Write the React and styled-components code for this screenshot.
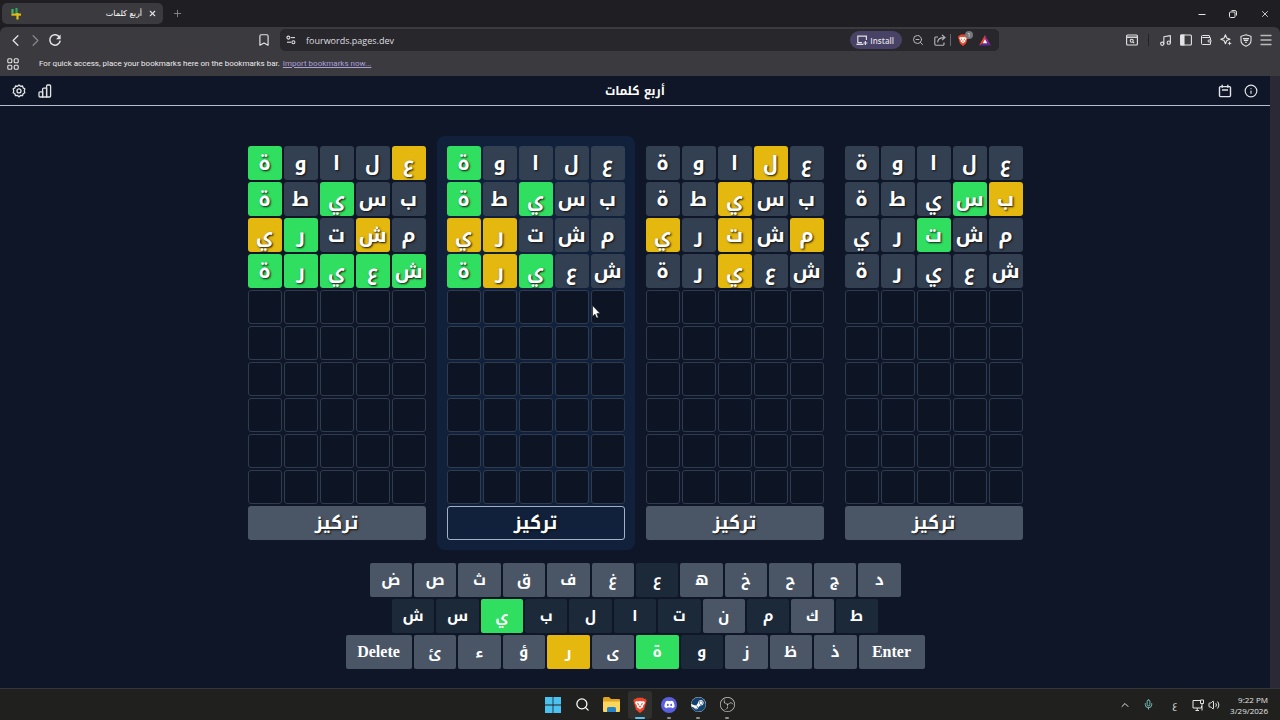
import React from 'react';
import styled, { createGlobalStyle, css } from 'styled-components';
import {
  Bookmark, ChevronLeft, ChevronRight, ChevronUp, Mic, Music, Plus, Search,
  Volume2, Wallet, X, ZoomOut, Info,
} from 'lucide-react';
import { FaDiscord, FaSteam } from 'react-icons/fa';
import { SiObsstudio } from 'react-icons/si';

const GlobalStyle = createGlobalStyle`
  * {
    box-sizing: border-box;
  }
  body {
    margin: 0;
    background: #0e1628;
    color: #fff;
    font-family: "Open Sans", "Noto Sans", sans-serif;
  }
  button, input {
    font: inherit;
    color: inherit;
    border: 0;
    padding: 0;
    margin: 0;
    background: none;
  }
  svg {
    display: block;
    flex: none;
  }
`;

const ARABIC = '"Noto Kufi Arabic", "Noto Sans Arabic", "DejaVu Sans", sans-serif';

const WORDS = ['علاوة', 'بسيطة', 'مشتري', 'شعيرة'];
const ROW_COUNT = 10;

// g = right place, y = wrong place, n = not in the word
const BOARDS = [
  { id: 1, marks: ['ynnng', 'nngng', 'nyngy', 'ggggg'] },
  { id: 2, marks: ['nnnng', 'nngng', 'nnnyy', 'nngyg'], focused: true },
  { id: 3, marks: ['nynnn', 'nnynn', 'ynyny', 'nnynn'] },
  { id: 4, marks: ['nnnnn', 'ygnnn', 'nngnn', 'nnnnn'] },
];

const KEY_ROWS = [
  { name: 'top', width: 531, keys: [...'ضصثقفغعهخحجد'] },
  { name: 'middle', width: 486, keys: [...'شسيبلاتنمكط'] },
  { name: 'bottom', width: 579, keys: ['Delete', ...'ئءؤرىةوزظذ', 'Enter'] },
];
const KEY_STATES = {
  ي: 'g', ة: 'g', ر: 'y',
  ع: 'used', ش: 'used', س: 'used', ب: 'used', ل: 'used', ا: 'used',
  ت: 'used', م: 'used', ط: 'used', و: 'used',
};

const COLORS = {
  g: '#30df60',
  y: '#e4b80f',
  n: '#334052',
  used: '#1c2939',
};

const ReloadIcon = () => (
  <svg width="14" height="14" viewBox="0 0 14 14" fill="none" stroke="currentColor" strokeWidth="1.5">
    <path d="M11.6 4.4A5.2 5.2 0 1 0 12.2 7.6" />
    <path d="M12.6 1.6v4.6H8z" fill="currentColor" stroke="none" />
  </svg>
);
const GridIcon = () => (
  <svg width="12" height="12" viewBox="0 0 12 12" fill="none" stroke="currentColor" strokeWidth="1.1">
    <rect x="0.8" y="0.8" width="4" height="4" rx="1" />
    <rect x="7.2" y="0.8" width="4" height="4" rx="1" />
    <rect x="0.8" y="7.2" width="4" height="4" rx="1" />
    <rect x="7.2" y="7.2" width="4" height="4" rx="1" />
  </svg>
);
const TuneIcon = () => (
  <svg width="10" height="10" viewBox="0 0 10 10" fill="none" stroke="currentColor" strokeWidth="1.1">
    <circle cx="2.4" cy="2.6" r="1.5" />
    <path d="M5 2.6h4" />
    <circle cx="7.4" cy="7.2" r="1.5" />
    <path d="M1 7.2h4" />
  </svg>
);
const InstallIcon = () => (
  <svg width="12" height="12" viewBox="0 0 12 12" fill="none" stroke="currentColor" strokeWidth="1.2">
    <path d="M6 8.6H1.8V2.2h8.6V6M0.4 10.4h7M9.4 7v4M7.4 9h4" />
  </svg>
);
const ShareIcon = () => (
  <svg width="12" height="12" viewBox="0 0 12 12" fill="none" stroke="#b9b8bc" strokeWidth="1.1">
    <path d="M4 3H1.6A1 1 0 0 0 .8 4v6.2a1 1 0 0 0 1 1H9a1 1 0 0 0 1-1V8.4" />
    <path d="M3.6 8.4c.2-3 2-4.8 6.4-4.8M8 1l3 2.6-3 2.6" />
  </svg>
);
const BatIcon = () => (
  <svg width="12" height="11" viewBox="0 0 12 11">
    <path d="M6 0L0 10.6l6-3.4z" fill="#e8412c" />
    <path d="M6 0l6 10.6-6-3.4z" fill="#8a2a92" />
    <path d="M0 10.6h12L6 7z" fill="#5b2a9c" />
    <path d="M6 4.2l2.2 4H3.8z" fill="#fff" />
  </svg>
);
const BraveMark = ({ size }) => (
  <svg width={size} height={size} viewBox="0 0 24 24">
    <path d="M7.5 1h9l2 2 2-.2L22 6l-1 3-3 10-6 5-6-5L3 9 2 6l1.5-3.2 2 .2z" fill="#f0452a" />
    <path d="M6 6l3 .6L12 6l3 .6L18 6l1.5 3-3 4 .3 2L12 18.500 7.200 15l.3-2-3-4z" fill="#fff" />
    <path d="M7.5 9l3 1-1 3zM16.500 9l-3 1 1 3zM12 12l1.500 2.500L12 16l-1.500-1.500z" fill="#f0452a" />
  </svg>
);
const TabSearchIcon = () => (
  <svg width="12" height="12" viewBox="0 0 12 12" fill="none" stroke="currentColor" strokeWidth="1.1">
    <rect x="0.6" y="1" width="10.8" height="10" rx="1" />
    <path d="M.6 3.2h10.8" strokeWidth="1.4" />
    <circle cx="5.7" cy="6.8" r="1.5" />
    <path d="M6.8 7.9l1.4 1.3" />
  </svg>
);
const PanelIcon = () => (
  <svg width="12" height="12" viewBox="0 0 12 12" fill="none" stroke="currentColor" strokeWidth="1.1">
    <rect x="0.6" y="1" width="10.8" height="10" rx="1" />
    <path d="M1 1h3v10H1z" fill="currentColor" />
  </svg>
);
const LeoIcon = () => (
  <svg width="12" height="12" viewBox="0 0 12 12" fill="none" stroke="currentColor" strokeWidth="1.1" strokeLinejoin="round">
    <path d="M5.400.8l1.300 3.200 3.300 1.300-2.200.8-1.100.6-1.300 3.100-1.300-3.200-3.300-1.300 3.300-1.300z" />
    <path d="M9.600 7l.6 1.700 1.600.6-1.600.6-.6 1.700-.6-1.700-1.600-.6 1.600-.6z" fill="currentColor" stroke="none" />
  </svg>
);
const VpnIcon = () => (
  <svg width="12" height="13" viewBox="0 0 12 13" fill="none" stroke="currentColor" strokeWidth="1.1">
    <path d="M6 .8l5 1.500v4.200c0 2.600-2 4.600-5 5.700-3-1.100-5-3.100-5-5.700V2.300z" />
    <path d="M3 4.600h6M3.800 6.400h4.400M5 8.200h2" />
  </svg>
);
const MenuIcon = () => (
  <svg width="12" height="12" viewBox="0 0 12 12" stroke="#bbb" strokeWidth="1.5">
    <path d="M.5 1.500h11M.5 6h11M.5 10.500h11" />
  </svg>
);
const MinimizeIcon = () => (
  <svg width="8" height="8" viewBox="0 0 8 8" stroke="currentColor"><path d="M.5 4.500h7" /></svg>
);
const RestoreIcon = () => (
  <svg width="8" height="8" viewBox="0 0 8 8" fill="none" stroke="currentColor">
    <rect x="0.5" y="2" width="5.5" height="5.5" rx="1" />
    <path d="M2.500.6h3.500a1.500 1.500 0 0 1 1.500 1.500v3.400" />
  </svg>
);
const FourIcon = () => (
  <svg width="12" height="12" viewBox="0 0 12 12" fill="none" strokeWidth="2.2">
    <path d="M2.500 1v4.500" stroke="#2fbf63" />
    <path d="M6.500 0v7" stroke="#2fa862" />
    <path d="M1.400 6.600H11" stroke="#e4b80f" />
    <path d="M7.500 5v6.500" stroke="#d8c21c" />
  </svg>
);
const GearIcon = () => (
  <svg width="14" height="14" viewBox="0 0 14 14" fill="none" stroke="currentColor" strokeWidth="1.3" strokeLinejoin="round">
    <path d="M7 1l1.500 1.300 2-.3.600 1.900 1.700 1-.5 1.900.5 2-1.700 1-.6 1.900-2-.3L7 12.800l-1.500-1.400-2 .3-.6-1.900-1.700-1 .5-2-.5-1.900 1.700-1L3.500 2l2 .3z" />
    <circle cx="7" cy="6.900" r="2" />
  </svg>
);
const StatsIcon = () => (
  <svg width="14" height="14" viewBox="0 0 14 14" fill="none" stroke="currentColor" strokeWidth="1.3" strokeLinejoin="round">
    <path d="M1 12V8.800a1 1 0 0 1 1-1h2.600V13H2a1 1 0 0 1-1-1z" />
    <path d="M4.600 13V5.200a1 1 0 0 1 1-1h3V13z" />
    <path d="M8.600 13V2a1 1 0 0 1 1-1h2a1 1 0 0 1 1 1v10a1 1 0 0 1-1 1z" />
  </svg>
);
const CalendarIcon = () => (
  <svg width="14" height="14" viewBox="0 0 14 14" fill="none" stroke="currentColor" strokeWidth="1.4">
    <rect x="1.5" y="2.600" width="11" height="10" rx="1" />
    <path d="M4.200.8v3M9.800.8v3M4 6h6" />
  </svg>
);
const PointerIcon = () => (
  <svg width="9" height="14" viewBox="0 0 9 14">
    <path d="M.6.600v10.800l2.400-2.200 1.600 3.900 1.800-.7-1.600-3.800h3.300z" fill="#fff" stroke="#111" strokeWidth="0.6" />
  </svg>
);
const WindowsIcon = () => (
  <svg width="16" height="16" viewBox="0 0 16 16" fill="#4cc2f1">
    <path d="M0 0h7.600v7.600H0zM8.400 0H16v7.600H8.400zM0 8.400h7.600V16H0zM8.400 8.400H16V16H8.400z" />
  </svg>
);
const FolderIcon = () => (
  <svg width="17" height="15" viewBox="0 0 17 15">
    <path d="M0 1.500A1.500 1.500 0 0 1 1.500 0H6l2 2h8a1 1 0 0 1 1 1v11H0z" fill="#e0a526" />
    <path d="M0 4.500h17V14a1 1 0 0 1-1 1H1a1 1 0 0 1-1-1z" fill="#fbd65b" />
    <path d="M4 15v-3.500A1.500 1.500 0 0 1 5.500 10h6a1.500 1.500 0 0 1 1.500 1.500V15z" fill="#2584c9" />
  </svg>
);
const NetworkIcon = () => (
  <svg width="12" height="12" viewBox="0 0 12 12" fill="none" stroke="currentColor">
    <path d="M8 1.500H1v7.500h8.500V7M3.500 11.500H7M5.200 9v2.500" />
    <path d="M8.500 1h3v3.500h-3zM10 4.500v7" />
  </svg>
);

const Screen = styled.div`
  display: flex;
  flex-direction: column;
  min-height: 100vh;
`;

const TabStrip = styled.div`
  display: flex;
  align-items: center;
  height: 27px;
  padding: 0 10px 0 2px;
  background: #1f1e22;
`;
const Tab = styled.div`
  display: flex;
  align-items: center;
  width: 161px;
  height: 21px;
  margin-right: 9px;
  padding: 0 6px 0 8px;
  gap: 6px;
  border-radius: 5px;
  background: #3b3a3e;
`;
const TabTitle = styled.span`
  flex: 1;
  direction: rtl;
  font: 8px/16px "DejaVu Sans", sans-serif;
`;
const WindowButtons = styled.div`
  display: flex;
  gap: 23px;
  margin-left: auto;
`;
const IconButton = styled.button`
  display: flex;
  align-items: center;
  justify-content: center;
  color: ${props => props.$dim ? '#88878b' : '#e4e4e6'};
`;

const ToolbarWrap = styled.div`
  background: #1f1e22;
`;
const Toolbar = styled.div`
  display: flex;
  align-items: center;
  height: 26px;
  padding: 0 8px 0 5px;
  background: #3b3a3e;
  border-radius: 6px 6px 0 0;
`;
const NavButtons = styled.div`
  display: flex;
  width: 252px;

  button {
    width: 20px;
  }
`;
const AddressBar = styled.form`
  display: flex;
  flex: 1;
  align-items: center;
  gap: 10px;
  height: 22px;
  margin: 0 127px 0 9px;
  padding: 0 8px 0 6px;
  border-radius: 5px;
  background: #28272b;
  color: #dedee0;
`;
const AddressInput = styled.input`
  flex: 1;
  min-width: 0;
  height: 20px;
  font-size: 9px;
  outline: 0;
`;
const InstallButton = styled.button`
  display: flex;
  align-items: center;
  gap: 2px;
  height: 18px;
  padding: 0 8px 0 6px;
  border-radius: 9px;
  background: #484266;
  font-size: 8px;
  font-weight: 600;
`;
const AddressDivider = styled.span`
  width: 1px;
  height: 12px;
  margin: 0 -4px 0 -6px;
  background: #66656a;
`;
const ShieldButton = styled(IconButton)`
  position: relative;
`;
const ShieldCount = styled.span`
  position: absolute;
  top: -3px;
  right: -4px;
  width: 8px;
  height: 8px;
  border-radius: 4px;
  background: #77777d;
  font-size: 6px;
  line-height: 8px;
`;
const Extras = styled.div`
  display: flex;
  align-items: center;
  gap: 8px;
`;
const ExtrasDivider = styled.span`
  width: 1px;
  height: 12px;
  margin: 0 2px;
  background: #242428;
`;
const BookmarksBar = styled.div`
  display: flex;
  align-items: center;
  height: 23px;
  padding: 0 7px 2px;
  background: #3b3a3e;
  font: 8px/12px Roboto, sans-serif;
  color: #ececee;
`;
const BookmarksHint = styled.span`
  margin-left: 20px;
`;
const BookmarksLink = styled.a`
  margin-left: 3px;
  color: #aaa0dc;
  text-decoration: underline;
`;

const Viewport = styled.div`
  display: flex;
  flex: 1;
`;
const Scrollbar = styled.div`
  width: 10px;
  background: #2a2935;
`;
const Page = styled.main`
  flex: 1;
  background: #0e1628;
`;
const Header = styled.header`
  display: flex;
  align-items: center;
  justify-content: space-between;
  height: 30px;
  padding: 0 12px;
  border-bottom: 1px solid #b6bccb;
`;
const HeaderGroup = styled.div`
  display: flex;
  gap: 12px;
`;
const Title = styled.h1`
  margin: 0;
  font: bold 12px/20px ${ARABIC};
`;

const Boards = styled.section`
  display: flex;
  justify-content: center;
  gap: 1px;
  padding: 30px 0 13px;
`;
const BoardPanel = styled.div`
  display: flex;
  flex-direction: column;
  gap: 2px;
  width: 198px;
  padding: 10px;
  border-radius: 8px;
  background: ${props => props.$focused ? '#11213b' : 'transparent'};
`;
const Grid = styled.div`
  display: grid;
  grid-template-columns: repeat(5, 1fr);
  gap: 2px;
  direction: rtl;
`;
const Tile = styled.div`
  position: relative;
  display: flex;
  align-items: center;
  justify-content: center;
  height: 34px;
  border-radius: 3px;
  font: bold 20px/34px ${ARABIC};
  text-shadow: 1px 1px 2px #111;
  ${props => props.$mark ? css`
    background: ${COLORS[props.$mark]};
  ` : css`
    border: 1px solid #2f3b4e;
    background: #0d1525;
  `}
`;
const Pointer = styled.span`
  position: absolute;
  top: 14px;
  left: 0;
`;
const FocusButton = styled.button`
  height: 34px;
  border-radius: 3px;
  font: bold 18px/30px ${ARABIC};
  text-shadow: 1px 1px 2px #111;
  background: #4a5666;
  ${props => props.$focused && css`
    border: 1px solid #a5b0c0;
    background: #11213b;
  `}
`;

const Keyboard = styled.section`
  display: flex;
  flex-direction: column;
  align-items: center;
  gap: 2px;
`;
const KeyRow = styled.div`
  display: flex;
  gap: 2px;
  width: ${props => props.$width}px;
`;
const Key = styled.button`
  flex: ${props => props.$wide ? '0 0 66px' : '1 1 0'};
  height: 34px;
  border-radius: 2px;
  background: ${props => COLORS[props.$state] || '#4a5666'};
  font: ${props => props.$wide ? 'bold 16px/30px "Liberation Serif", serif' : `bold 15px/30px ${ARABIC}`};
`;

const Taskbar = styled.footer`
  display: grid;
  grid-template-columns: 1fr auto 1fr;
  align-items: center;
  height: 32px;
  padding: 0 12px;
  border-top: 1px solid #35363a;
  background: #20211f;
`;
const Apps = styled.div`
  grid-column: 2;
  display: flex;
  gap: 5px;
`;
const AppButton = styled.button`
  position: relative;
  display: flex;
  align-items: center;
  justify-content: center;
  width: 24px;
  height: 28px;
  border-radius: 3px;
  color: ${props => props.$color || '#fff'};
  background: ${props => props.$active ? '#30302f' : 'none'};

  &::after {
    content: "";
    position: absolute;
    bottom: 0;
    width: ${props => props.$active ? '10px' : '4px'};
    height: 2px;
    border-radius: 1px;
    background: ${props => props.$active ? '#5cc0ee' : props.$running ? '#8f8f8f' : 'none'};
  }
`;
const DiscordBadge = styled.span`
  display: flex;
  align-items: center;
  justify-content: center;
  width: 16px;
  height: 16px;
  border-radius: 8px;
  background: #5a5fe0;
`;
const SteamBadge = styled.span`
  border-radius: 8px;
  background: #fff;
`;
const Tray = styled.div`
  display: flex;
  align-items: center;
  justify-content: flex-end;
  gap: 4px;
  color: #e4e4e4;
`;
const TrayGroup = styled.div`
  display: flex;
  align-items: center;
  gap: ${props => props.$gap}px;
  margin-right: ${props => props.$after}px;
`;
const TrayLanguage = styled.span`
  font: 9px/14px ${ARABIC};
`;
const Clock = styled.div`
  font-size: 8px;
  line-height: 11px;
  text-align: right;
`;

const Browser = () => (
  <>
    <TabStrip>
      <Tab>
        <FourIcon />
        <TabTitle>أربع كلمات</TabTitle>
        <IconButton aria-label="Close tab"><X size={9} strokeWidth={3} /></IconButton>
      </Tab>
      <IconButton $dim aria-label="New tab"><Plus size={11} /></IconButton>
      <WindowButtons>
        <IconButton aria-label="Minimize"><MinimizeIcon /></IconButton>
        <IconButton aria-label="Restore"><RestoreIcon /></IconButton>
        <IconButton aria-label="Close"><X size={10} /></IconButton>
      </WindowButtons>
    </TabStrip>
    <ToolbarWrap>
      <Toolbar>
        <NavButtons>
          <IconButton aria-label="Back"><ChevronLeft size={19} strokeWidth={1.6} /></IconButton>
          <IconButton $dim aria-label="Forward"><ChevronRight size={19} strokeWidth={1.6} /></IconButton>
          <IconButton aria-label="Reload"><ReloadIcon /></IconButton>
        </NavButtons>
        <IconButton aria-label="Bookmark"><Bookmark size={14} /></IconButton>
        <AddressBar>
          <TuneIcon />
          <AddressInput aria-label="Address" defaultValue="fourwords.pages.dev" />
          <InstallButton type="button"><InstallIcon />Install</InstallButton>
          <IconButton type="button" aria-label="Zoom"><ZoomOut size={12} color="#b9b8bc" /></IconButton>
          <IconButton type="button" aria-label="Share"><ShareIcon /></IconButton>
          <AddressDivider />
          <ShieldButton type="button" aria-label="Shields">
            <BraveMark size={12} />
            <ShieldCount>1</ShieldCount>
          </ShieldButton>
          <IconButton type="button" aria-label="Rewards"><BatIcon /></IconButton>
        </AddressBar>
        <Extras>
          <IconButton aria-label="Search tabs"><TabSearchIcon /></IconButton>
          <ExtrasDivider />
          <IconButton aria-label="Playlist"><Music size={13} /></IconButton>
          <IconButton aria-label="Sidebar"><PanelIcon /></IconButton>
          <IconButton aria-label="Wallet"><Wallet size={12} /></IconButton>
          <IconButton aria-label="Leo"><LeoIcon /></IconButton>
          <IconButton aria-label="VPN"><VpnIcon /></IconButton>
          <IconButton aria-label="Menu"><MenuIcon /></IconButton>
        </Extras>
      </Toolbar>
    </ToolbarWrap>
    <BookmarksBar>
      <IconButton aria-label="All bookmarks"><GridIcon /></IconButton>
      <BookmarksHint>For quick access, place your bookmarks here on the bookmarks bar.</BookmarksHint>
      <BookmarksLink href="#import">Import bookmarks now...</BookmarksLink>
    </BookmarksBar>
  </>
);

const Board = ({ marks, focused }) => {
  const tiles = [];
  for (let row = 0; row < ROW_COUNT; row++) {
    for (let col = 0; col < 5; col++) {
      tiles.push(
        <Tile key={`${row}-${col}`} $mark={marks[row] && marks[row][col]}>
          {marks[row] && WORDS[row][col]}
          {focused && row === 4 && col === 0 && <Pointer><PointerIcon /></Pointer>}
        </Tile>
      );
    }
  }
  return (
    <BoardPanel $focused={focused}>
      <Grid>{tiles}</Grid>
      <FocusButton $focused={focused}>تركيز</FocusButton>
    </BoardPanel>
  );
};

const App = () => (
  <Screen>
    <GlobalStyle />
    <Browser />
    <Viewport>
      <Page>
        <Header>
          <HeaderGroup>
            <IconButton aria-label="Settings"><GearIcon /></IconButton>
            <IconButton aria-label="Statistics"><StatsIcon /></IconButton>
          </HeaderGroup>
          <Title>أربع كلمات</Title>
          <HeaderGroup>
            <IconButton aria-label="Calendar"><CalendarIcon /></IconButton>
            <IconButton aria-label="Info"><Info size={14} /></IconButton>
          </HeaderGroup>
        </Header>
        <Boards>
          {BOARDS.map((board) => (
            <Board key={board.id} marks={board.marks} focused={board.focused} />
          ))}
        </Boards>
        <Keyboard>
          {KEY_ROWS.map((row) => (
            <KeyRow key={row.name} $width={row.width}>
              {row.keys.map((key) => (
                <Key key={key} $state={KEY_STATES[key]} $wide={key.length > 1}>{key}</Key>
              ))}
            </KeyRow>
          ))}
        </Keyboard>
      </Page>
      <Scrollbar />
    </Viewport>
    <Taskbar>
      <Apps>
        <AppButton aria-label="Start"><WindowsIcon /></AppButton>
        <AppButton aria-label="Search"><Search size={15} /></AppButton>
        <AppButton aria-label="Files"><FolderIcon /></AppButton>
        <AppButton aria-label="Brave" $active><BraveMark size={16} /></AppButton>
        <AppButton aria-label="Discord" $running><DiscordBadge><FaDiscord size={11} /></DiscordBadge></AppButton>
        <AppButton aria-label="Steam" $running $color="#14426e"><SteamBadge><FaSteam size={15} /></SteamBadge></AppButton>
        <AppButton aria-label="OBS" $running $color="#c8c8c8"><SiObsstudio size={15} /></AppButton>
      </Apps>
      <Tray>
        <TrayGroup $gap={12} $after={14}>
          <ChevronUp size={12} />
          <Mic size={11} color="#7fc9c4" />
        </TrayGroup>
        <TrayGroup $gap={15} $after={6}>
          <TrayLanguage>ع</TrayLanguage>
          <TrayGroup $gap={4} $after={0}>
            <NetworkIcon />
            <Volume2 size={12} />
          </TrayGroup>
        </TrayGroup>
        <Clock>
          <div>9:22 PM</div>
          <div>3/29/2026</div>
        </Clock>
      </Tray>
    </Taskbar>
  </Screen>
);

export default App;
